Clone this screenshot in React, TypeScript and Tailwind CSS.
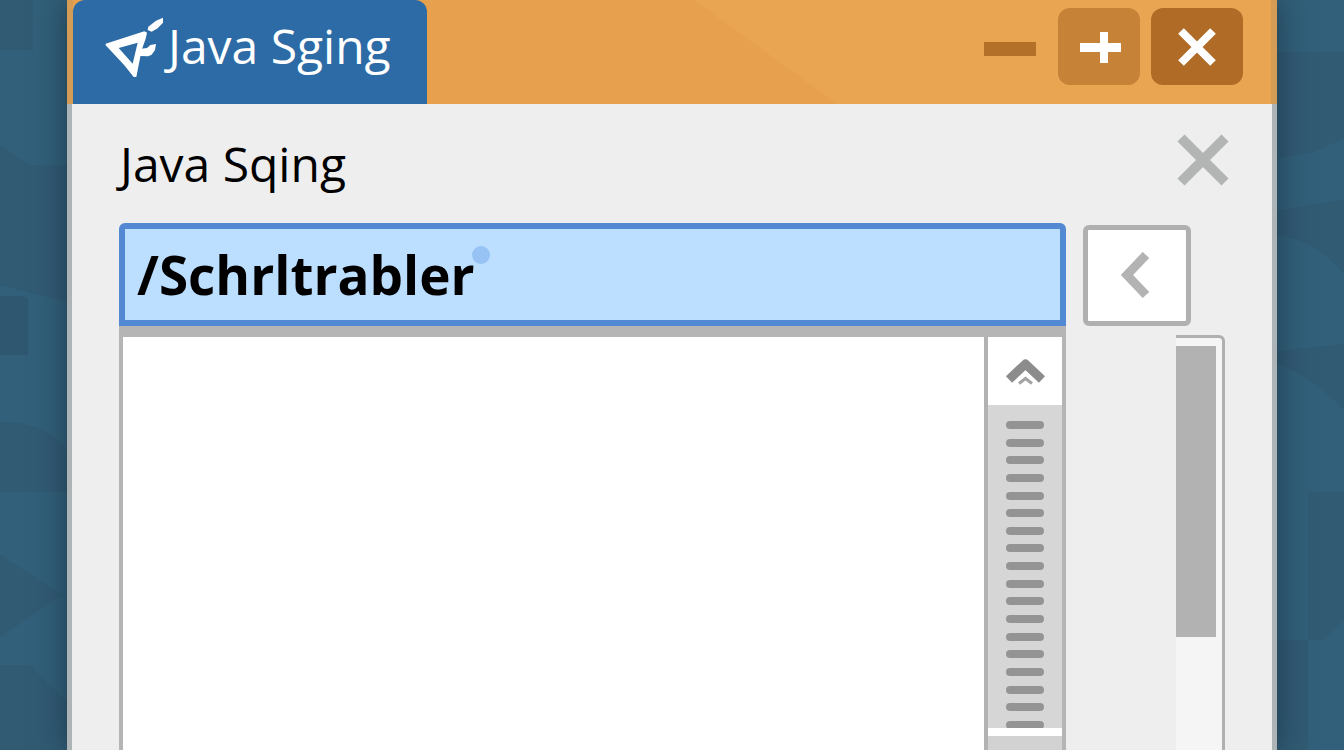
import type { ReactNode } from "react";

const GRIP_LINES = 18;

function Backdrop() {
  return (
    <svg
      aria-hidden
      className="absolute inset-0 -z-10 h-full w-full"
      viewBox="0 0 1344 750"
      preserveAspectRatio="none"
    >
      <rect width="1344" height="750" fill="#325f79" />
      <g fill="#315a73">
        <path d="M0 0h33v50H0z" />
        <path d="M0 145l30 20h50v140L0 285z" />
        <path d="M0 422q50 0 67 30v40H0z" />
        <path d="M0 555l62 40L0 637z" />
        <path d="M0 665h30l40 40v45H0z" />
        <path d="M1270 52h74v86l-30 14-44 8z" />
        <path d="M1270 212l44-8 30-4v74q-20-24-46-34l-28-8z" />
        <path d="M1270 352l74-8v66q-30-32-74-50z" />
        <path d="M1308 492h36v128l-20 20h-16z" />
        <path d="M1270 640h38v110h-38z" />
      </g>
      <path d="M0 296h22q6 0 6 6v53H0z" fill="#2f5870" />
    </svg>
  );
}

function Logo() {
  return (
    <svg
      aria-hidden
      className="h-15 w-[59px] shrink-0 overflow-visible"
      viewBox="12 6 177 180"
      fill="#fff"
    >
      <path
        fillRule="evenodd"
        d="M14 89L130 52L138 56L134 74L122 108L106 189L98 189L70 154L14 94ZM53 102L110 86L95 149Z"
      />
      <path d="M140 48L142 38L165 20L186 11L186 26L170 43L152 53Z" />
      <path d="M120 104L138 102L148 93L165 90L162 108L152 122L142 127L116 126Z" />
    </svg>
  );
}

type WindowButtonProps = {
  label: string;
  className: string;
  children: ReactNode;
};

function WindowButton({ label, className, children }: WindowButtonProps) {
  return (
    <button
      type="button"
      aria-label={label}
      className={`flex h-[77px] shrink-0 items-center justify-center rounded-xl ${className}`}
    >
      {children}
    </button>
  );
}

function TitleBar() {
  return (
    <header className="flex h-[104px] justify-between overflow-hidden border-x-6 border-[#d59c55] bg-linear-[36deg] from-[#e7a04d] from-57% to-[#e9a552] to-57% pr-7">
      <div className="flex items-start rounded-t-xl bg-[#2c6ba6] pr-9 pl-8 text-white">
        <div className="flex items-center gap-1 pt-4">
          <Logo />
          <span className="text-5xl leading-15">Java Sging</span>
        </div>
      </div>
      <div className="flex gap-[11px] pt-2">
        <WindowButton label="Minimize" className="w-[74px]">
          <span className="mt-1 h-3.5 w-13 bg-[#b27029]" />
        </WindowButton>
        <WindowButton label="Maximize" className="w-[82px] bg-[#c68237]">
          <svg aria-hidden className="size-11" viewBox="0 0 44 44" fill="#fff">
            <path d="M3 18h41v9H3zM23 7h8v31h-8z" />
          </svg>
        </WindowButton>
        <WindowButton label="Close" className="w-[92px] bg-[#b06c26]">
          <svg aria-hidden className="size-11" viewBox="0 0 44 44" stroke="#fff" strokeWidth="8">
            <path d="M6 6l32 32M38 6L6 38" />
          </svg>
        </WindowButton>
      </div>
    </header>
  );
}

function ScrollRail() {
  return (
    <div className="flex w-[78px] shrink-0 flex-col border-l-4 border-[#b2b2b2] bg-[#d6d6d6]">
      <button
        type="button"
        aria-label="Scroll up"
        className="flex h-17 items-center justify-center bg-white"
      >
        <svg aria-hidden className="h-7 w-10" viewBox="0 0 40 28" fill="none">
          <path d="M4 22.500L20.500 7L37 22.500" stroke="#8c8c8c" strokeWidth="9" strokeLinejoin="round" />
          <path d="M14 26.500L20.500 21.500L27 26.500" stroke="#a3a3a3" strokeWidth="3" />
        </svg>
      </button>
      <div className="mt-4 flex h-[308px] flex-col items-center justify-between">
        {Array.from({ length: GRIP_LINES }, (_, i) => (
          <span key={i} className="h-2 w-[38px] rounded-full bg-[#949494]" />
        ))}
      </div>
      <div className="-mt-px h-2 bg-white" />
      <div className="flex-1 bg-[#d2d2d2]" />
    </div>
  );
}

export default function App() {
  return (
    <div className="relative isolate flex min-h-screen flex-col overflow-hidden font-['Open_Sans','Noto_Sans',sans-serif]">
      <Backdrop />
      <main className="mx-[67px] flex flex-1 flex-col shadow-[0_0_28px_rgba(20,45,60,0.7)]">
        <TitleBar />
        <section className="flex flex-1 flex-col border-x-5 border-[#adb4b8] bg-[#eeeeee]">
          <div className="flex h-[119px] items-center justify-between pr-10 pl-12">
            <h1 className="text-5xl leading-15 text-black">
              <label htmlFor="path">Java Sqing</label>
            </h1>
            <button type="button" aria-label="Dismiss" className="size-15">
              <svg aria-hidden className="size-15" viewBox="0 0 60 60" stroke="#b3b4b4" strokeWidth="10">
                <path d="M9 4L53 48M53 4L9 48" />
              </svg>
            </button>
          </div>

          <div className="grid flex-1 grid-cols-[1fr_142px] grid-rows-[103px_1fr] gap-x-[17px] px-[47px]">
            <div className="relative">
              <input
                id="path"
                type="text"
                defaultValue="/Schrltrabler"
                className="h-full w-full rounded-t-md border-6 border-[#5289d2] bg-[#bddfff] px-3 text-[53px] font-bold text-black outline-none"
              />
              <span className="absolute top-[23px] left-[353px] size-[18px] rounded-full bg-[#96c3f3]" />
            </div>
            <button
              type="button"
              aria-label="Back"
              className="flex h-[101px] w-27 items-center justify-center self-end rounded-md border-5 border-[#b0b0b0] bg-white"
            >
              <svg aria-hidden className="h-12 w-8" viewBox="0 0 32 48" fill="none" stroke="#b3b3b3" strokeWidth="9">
                <path d="M25 3L6 23L25 43" />
              </svg>
            </button>

            <div className="flex border-x-4 border-t-11 border-[#b5b5b5] bg-white">
              <textarea aria-label="Output" className="min-w-0 flex-1 resize-none bg-white outline-none" />
              <ScrollRail />
            </div>
            <div className="mt-[9px] w-[49px] justify-self-end rounded-tr-md border-t-3 border-r-3 border-[#b0b0b0] bg-[#f5f5f5] pt-2">
              <div className="h-[291px] w-10 bg-[#b2b2b2]" />
            </div>
          </div>
        </section>
      </main>
    </div>
  );
}
